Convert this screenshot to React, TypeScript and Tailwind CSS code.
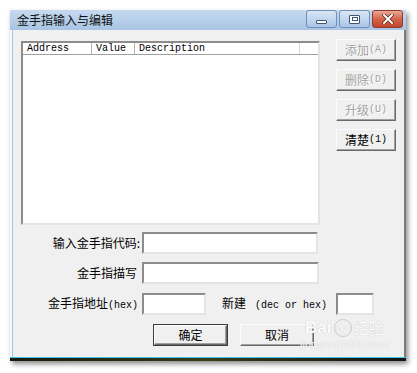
import React from "react";

const sunken =
  "border-2 border-t-[#8c8c8c] border-l-[#8c8c8c] border-b-[#e4e4e4] border-r-[#e4e4e4] bg-white";
const raised =
  "flex items-center justify-center border border-t-[#fcfcfc] border-l-[#fcfcfc] border-b-[#6a6a6a] border-r-[#6a6a6a] bg-[#f0f0f0] shadow-[inset_-1px_-1px_0_#a0a0a0]";
const cjk = "font-['Noto_Sans_CJK_SC','Noto_Sans',sans-serif] text-[12px] leading-[14px]";
const mono = "font-['Liberation_Mono',monospace] text-[10px] leading-[12px]";

const SideButton = ({ label, keyName, disabled }: { label: string; keyName: string; disabled?: boolean }) => (
  <div
    className={`${raised} h-[22px] w-[60px] ${
      disabled ? "text-[#a3a3a3] [text-shadow:1px_1px_0_#ffffff]" : "text-black"
    }`}
  >
    <span className={cjk}>{label}</span>
    <span className={mono}>({keyName})</span>
  </div>
);

const CaptionButton = ({ kind }: { kind: "min" | "max" | "close" }) => {
  if (kind === "close") {
    return (
      <div className="flex h-[18px] w-[31px] items-center justify-center rounded-[3px] border border-[#8d3b2b] bg-gradient-to-b from-[#e9a896] via-[#d5644b] to-[#c2452c]">
        <svg width="12" height="10" viewBox="0 0 12 10">
          <path d="M2 1 L10 9 M10 1 L2 9" stroke="#5a2418" strokeWidth="3.4" strokeLinecap="square" />
          <path d="M2 1 L10 9 M10 1 L2 9" stroke="#ffffff" strokeWidth="2" strokeLinecap="square" />
        </svg>
      </div>
    );
  }
  return (
    <div className="flex h-[18px] w-[31px] items-center justify-center rounded-[3px] border border-[#6f8fb7] bg-gradient-to-b from-[#dbe7f5] via-[#c2d6ee] to-[#aac4e4]">
      {kind === "min" ? (
        <div className="mt-[5px] h-[4px] w-[11px] rounded-[1px] border border-[#3f5574] bg-white" />
      ) : (
        <div className="flex h-[9px] w-[11px] items-center justify-center rounded-[1px] border border-[#3f5574] bg-white">
          <div className="h-[4px] w-[6px] border border-[#3f5574]" />
        </div>
      )}
    </div>
  );
};

export default function App() {
  return (
    <div className="relative h-[373px] w-[417px] bg-white">
      <div className="ml-[10px] pt-[10px]">
        <div className="w-[396px] shadow-[2px_3px_5px_rgba(0,0,0,0.45)]">
          {/* title bar */}
          <div className="flex h-[20px] items-start bg-gradient-to-b from-[#c6d9ef] to-[#a8c4e5] pl-[7px] pr-[3px]">
            <div className={`${cjk} mt-[3px] text-[#111111]`}>金手指输入与编辑</div>
            <div className="ml-auto flex gap-[2px]">
              <CaptionButton kind="min" />
              <CaptionButton kind="max" />
              <CaptionButton kind="close" />
            </div>
          </div>

          {/* client */}
          <div className="h-[327px] border-r-2 border-r-[#7c7c7c] border-l-2 border-l-[#f4f7fb] bg-[#f0f0f0]">
            <div className="h-full border-l border-l-[#a9c4e6] pl-[8px]">
              <div className="flex items-start pt-[9px]">
                {/* list view */}
                <div className={`${sunken} mt-[2px] h-[184px] w-[299px]`}>
                  <div className="flex h-[12px] border-b border-[#a0a0a0] text-black">
                    <div className={`${mono} w-[69px] border-r border-[#b4b4b4] pl-[4px]`}>Address</div>
                    <div className={`${mono} w-[43px] border-r border-[#b4b4b4] pl-[4px]`}>Value</div>
                    <div className={`${mono} w-[165px] border-r border-[#d8d8d8] pl-[4px]`}>Description</div>
                  </div>
                </div>

                <div className="ml-[16px] flex flex-col gap-[8px]">
                  <SideButton label="添加" keyName="A" disabled />
                  <SideButton label="删除" keyName="D" disabled />
                  <SideButton label="升级" keyName="U" disabled />
                  <SideButton label="清楚" keyName="1" />
                </div>
              </div>

              {/* form */}
              <div className="mt-[7px] flex flex-col gap-[8px]">
                <div className="flex items-center">
                  <div className={`${cjk} w-[119px] text-right text-black`}>输入金手指代码:</div>
                  <div className={`${sunken} ml-[2px] h-[22px] w-[176px]`} />
                </div>
                <div className="flex items-center">
                  <div className={`${cjk} w-[116px] text-right text-black`}>金手指描写</div>
                  <div className={`${sunken} ml-[5px] h-[22px] w-[177px]`} />
                </div>
                <div className="mt-[1px] flex items-center">
                  <div className="flex w-[117px] items-baseline justify-end text-black">
                    <span className={cjk}>金手指地址</span>
                    <span className={mono}>(hex)</span>
                  </div>
                  <div className={`${sunken} ml-[4px] h-[22px] w-[64px]`} />
                  <div className="ml-[16px] flex items-baseline text-black">
                    <span className={cjk}>新建</span>
                    <span className={`${mono} ml-[9px]`}>(dec or hex)</span>
                  </div>
                  <div className={`${sunken} ml-[9px] h-[22px] w-[38px]`} />
                </div>
                <div className="mt-[1px] flex gap-[12px] pl-[132px]">
                  <div className="border border-[#3c3c3c]">
                    <div className={`${raised} h-[20px] w-[73px]`}>
                      <span className={`${cjk} text-black`}>确定</span>
                    </div>
                  </div>
                  <div className={`${raised} h-[22px] w-[74px]`}>
                    <span className={`${cjk} text-black`}>取消</span>
                  </div>
                </div>
              </div>
            </div>
          </div>

          {/* bottom edge */}
          <div className="h-[4px] border-t border-[#3cc6e6] bg-gradient-to-r from-[#1a1a10] via-[#3a3a1a] to-[#141414]" />
        </div>
      </div>

      {/* watermark */}
      <div className="pointer-events-none absolute left-[300px] top-[318px] flex flex-col items-center text-white opacity-90 [text-shadow:0_0_1px_#b0b0b0]">
        <div className="flex items-center gap-[2px]">
          <span className="font-['Liberation_Sans',sans-serif] text-[17px] font-bold leading-[20px]">Bai</span>
          <span className="flex h-[18px] w-[18px] items-center justify-center rounded-full border border-[#c8c8c8] font-['Liberation_Sans',sans-serif] text-[10px] font-bold">du</span>
          <span className="font-['Noto_Sans_CJK_SC',sans-serif] text-[15px] leading-[20px]">经验</span>
        </div>
        <div className="font-['Liberation_Sans',sans-serif] text-[11px] leading-[12px]">jingyan.baidu.com</div>
      </div>
    </div>
  );
}
